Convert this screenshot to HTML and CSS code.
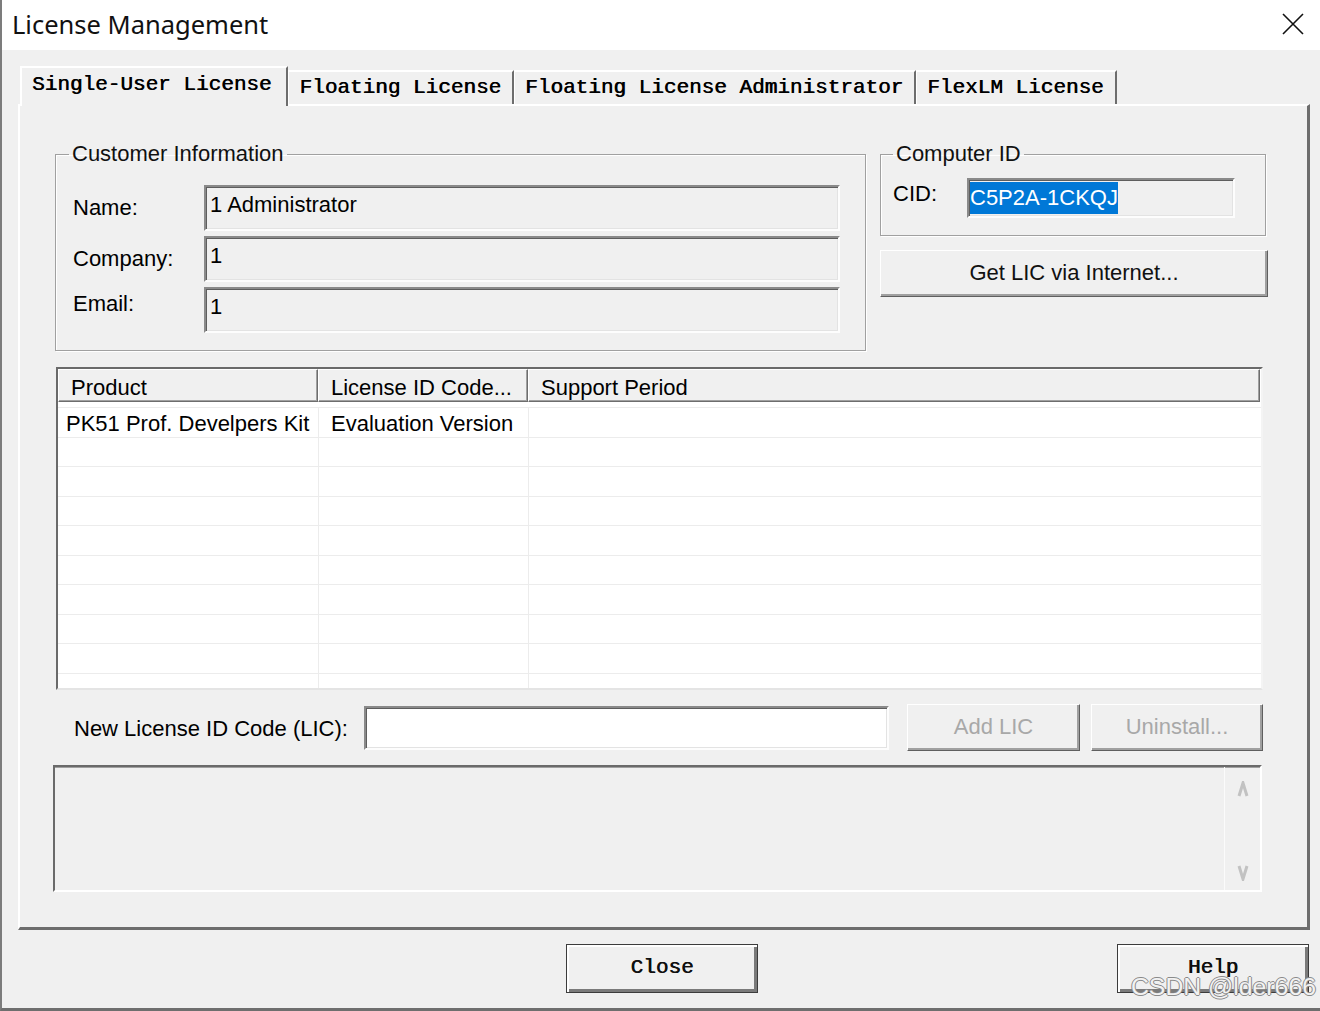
FILE: index.html
```html
<!DOCTYPE html>
<html>
<head>
	<meta charset="utf-8" />
	<title>License Management</title>
	<link rel="stylesheet" href="styles.css">
</head>
<body>
<div class="window">
	<div class="titlebar">
		<span class="title">License Management</span>
		<svg class="close-x" width="22" height="22" viewBox="0 0 22 22">
			<path d="M1 1 L21 21 M21 1 L1 21" stroke="#111" stroke-width="1.6" fill="none" />
		</svg>
	</div>
	<div class="client">
		<ul class="tabs">
			<li class="tab-selected">Single-User License</li>
			<li>Floating License</li>
			<li>Floating License Administrator</li>
			<li>FlexLM License</li>
		</ul>
		<div class="panel">
			<div class="top-row">
				<fieldset class="group customer">
					<legend>Customer Information</legend>
					<div class="form-grid">
						<label>Name:</label>
						<div class="field">1 Administrator</div>
						<label>Company:</label>
						<div class="field">1</div>
						<label class="email-label">Email:</label>
						<div class="field">1</div>
					</div>
				</fieldset>
				<div class="right-col">
					<fieldset class="group computer">
						<legend>Computer ID</legend>
						<div class="cid-row">
							<label>CID:</label>
							<div class="field cid"><span class="sel">C5P2A-1CKQJ</span></div>
						</div>
					</fieldset>
					<div class="btn get-lic">Get LIC via Internet...</div>
				</div>
			</div>

			<div class="list">
				<div class="list-head">
					<div>Product</div>
					<div>License ID Code...</div>
					<div>Support Period</div>
				</div>
				<div class="list-body">
					<div class="row"><div>PK51 Prof. Develpers Kit</div><div>Evaluation Version</div><div></div></div>
					<div class="row"><div></div><div></div><div></div></div>
					<div class="row"><div></div><div></div><div></div></div>
					<div class="row"><div></div><div></div><div></div></div>
					<div class="row"><div></div><div></div><div></div></div>
					<div class="row"><div></div><div></div><div></div></div>
					<div class="row"><div></div><div></div><div></div></div>
					<div class="row"><div></div><div></div><div></div></div>
					<div class="row"><div></div><div></div><div></div></div>
					<div class="row"><div></div><div></div><div></div></div>
				</div>
			</div>

			<div class="lic-row">
				<label>New License ID Code (LIC):</label>
				<div class="field lic-input"></div>
				<div class="btn disabled add-lic">Add LIC</div>
				<div class="btn disabled uninstall">Uninstall...</div>
			</div>

			<div class="memo">
				<div class="vscroll">
					<svg width="12" height="16" viewBox="0 0 12 16"><polyline points="2,15 6,2 10,15" fill="none" stroke="#c2c2c2" stroke-width="3" /></svg>
					<svg width="12" height="16" viewBox="0 0 12 16"><polyline points="2,1 6,14 10,1" fill="none" stroke="#c2c2c2" stroke-width="3" /></svg>
				</div>
			</div>
		</div>

		<div class="footer">
			<div class="btn dlg-btn">Close</div>
			<div class="btn dlg-btn help">Help</div>
		</div>
	</div>
	<div class="watermark">CSDN @lder666</div>
</div>
</body>
</html>
```

FILE: styles.css
```css
* {
	margin: 0;
	padding: 0;
	box-sizing: border-box;
}
ul {
	list-style: none;
}
body {
	background: #f0f0f0;
	font-family: "Liberation Sans", Arial, sans-serif;
	font-size: 22px;
	color: #000;
}
.window {
	position: relative;
	width: 1320px;
	height: 1011px;
	border-left: 2px solid #7c7c7c;
	border-bottom: 3px solid #6e6e6e;
	background: #f0f0f0;
	overflow: hidden;
}
.titlebar {
	height: 50px;
	background: #fff;
	display: flex;
	align-items: center;
	justify-content: space-between;
	padding: 0 16px 2px 10px;
}
.title {
	font-family: "Noto Sans", sans-serif;
	font-size: 25.5px;
	color: #111;
}
.client {
	padding-left: 16px;
}
/* tabs */
.tabs {
	display: flex;
	align-items: flex-end;
	padding-top: 16px;
	margin-left: 2px;
	font-family: "Liberation Mono", monospace;
	font-size: 21px;
	text-shadow: 0.6px 0 0 #000;
}
.tabs li {
	height: 34px;
	line-height: 32px;
	padding: 0 11px 0 10px;
	border-top: 2px solid #fff;
	border-left: 1px solid #fff;
	border-right: 2px solid #6d6d6d;
	background: #f0f0f0;
	white-space: nowrap;
}
.tabs .tab-selected {
	position: relative;
	z-index: 1;
	height: 40px;
	margin-bottom: -2px;
	line-height: 34px;
	padding: 0 15px 4px 10px;
	border-left: 2px solid #fff;
}
.panel {
	width: 1292px;
	border-top: 2px solid #fff;
	border-left: 2px solid #fff;
	border-right: 3px solid #6d6d6d;
	border-bottom: 3px solid #6d6d6d;
	padding: 35px 0 35px 0;
}
/* group boxes */
.top-row {
	display: flex;
	align-items: flex-start;
}
.group {
	border: 1px solid #a0a0a0;
	box-shadow: 1px 1px 0 #fff, inset 1px 1px 0 #fff;
	min-width: 0;
}
.group legend {
	line-height: 26px;
	padding: 0 3px;
	color: #111;
}
.customer {
	margin-left: 35px;
	width: 811px;
	padding: 18px 25px 17px 17px;
}
.customer legend {
	margin-left: -4px;
}
.form-grid {
	display: grid;
	grid-template-columns: 131px 636px;
	grid-auto-rows: 46px;
	row-gap: 5px;
	align-items: center;
}
.form-grid .email-label {
	padding-bottom: 12px;
}
.field {
	height: 46px;
	background: #f0f0f0;
	border: 2px solid;
	border-color: #8a8a8a #fdfdfd #fdfdfd #8a8a8a;
	box-shadow: inset 1px 1px 0 #5e5e5e, inset -1px -1px 0 #e3e3e3;
	padding: 0 4px 6px 4px;
	display: flex;
	align-items: center;
	white-space: nowrap;
}
.right-col {
	margin-left: 14px;
	width: 388px;
	display: flex;
	flex-direction: column;
}
.computer {
	width: 386px;
	padding: 11px 30px 17px 12px;
}
.cid-row {
	display: flex;
	align-items: center;
}
.cid-row label {
	width: 74px;
	padding-bottom: 8px;
}
.cid {
	width: 268px;
	height: 40px;
	padding: 0 0 0 1px;
}
.sel {
	background: #0078d7;
	color: #fff;
	line-height: 32px;
}
/* buttons */
.btn {
	background: #f0f0f0;
	border: 1px solid;
	border-color: #fff #5f5f5f #5f5f5f #fff;
	box-shadow: inset -2px -2px 0 #a0a0a0;
	display: flex;
	align-items: center;
	justify-content: center;
	white-space: nowrap;
	color: #111;
}
.get-lic {
	margin-top: 14px;
	height: 47px;
	padding-bottom: 2px;
}
.disabled {
	color: #a8a8a8;
}
/* list view */
.list {
	margin: 16px 0 0 36px;
	width: 1207px;
	height: 323px;
	background: #fff;
	border: 2px solid;
	border-color: #6a6a6a #f4f4f4 #e4e4e4 #6a6a6a;
	overflow: hidden;
}
.list-head,
.row {
	display: grid;
	grid-template-columns: 260px 210px 1fr;
}
.list-head {
	height: 33px;
	background: #fff;
}
.list-head div {
	background: #f0f0f0;
	border-top: 1px solid #fff;
	border-left: 1px solid #fff;
	border-right: 1px solid #6d6d6d;
	border-bottom: 1px solid #6d6d6d;
	box-shadow: inset -1px -1px 0 #a0a0a0;
	padding: 4px 0 0 12px;
	line-height: 27px;
	white-space: nowrap;
	overflow: hidden;
}
.list-head div:last-child {
	margin-right: 1px;
}
.list-body {
	margin-top: 5px;
	border-top: 1px solid #ececec;
}
.row {
	height: 29.5px;
	border-bottom: 1px solid #ececec;
}
.row div {
	padding: 2px 0 0 12px;
	line-height: 27px;
	border-left: 1px solid #ececec;
	white-space: nowrap;
}
.row div:first-child {
	padding-left: 8px;
	border-left: none;
}
/* new license row */
.lic-row {
	display: flex;
	align-items: center;
	margin: 14px 0 0 54px;
	height: 47px;
}
.lic-row label {
	width: 290px;
	padding-top: 3px;
}
.lic-input {
	width: 525px;
	height: 44px;
	background: #fff;
}
.add-lic {
	margin-left: 18px;
	width: 173px;
	height: 47px;
	padding-bottom: 2px;
}
.uninstall {
	margin-left: 11px;
	width: 172px;
	height: 47px;
	padding-bottom: 2px;
}
.memo {
	margin: 14px 0 0 33px;
	width: 1209px;
	height: 127px;
	border: 2px solid;
	border-color: #6a6a6a #fff #fff #6a6a6a;
	box-shadow: inset 0 1px 0 #a0a0a0;
	display: flex;
	justify-content: flex-end;
}
.vscroll {
	width: 36px;
	border-left: 1px solid #fbfbfb;
	display: flex;
	flex-direction: column;
	justify-content: space-between;
	align-items: center;
	padding: 14px 0 9px 0;
}
/* bottom buttons */
.footer {
	display: flex;
	padding: 14px 11px 0 548px;
}
.dlg-btn {
	width: 192px;
	height: 49px;
	border: 1px solid #3c3c3c;
	box-shadow: inset 2px 2px 0 #fff, inset -3px -3px 0 #7a7a7a;
	font-family: "Liberation Mono", monospace;
	font-size: 21px;
	text-shadow: 0.6px 0 0 #000;
	padding-bottom: 2px;
}
.help {
	margin-left: auto;
}
.watermark {
	position: absolute;
	right: 4px;
	bottom: 7px;
	font-size: 24.8px;
	line-height: 28px;
	color: #f2f2f2;
	text-shadow: -1px 0 #8a8a8a, 1px 0 #8a8a8a, 0 -1px #8a8a8a, 0 1px #8a8a8a;
}
```
